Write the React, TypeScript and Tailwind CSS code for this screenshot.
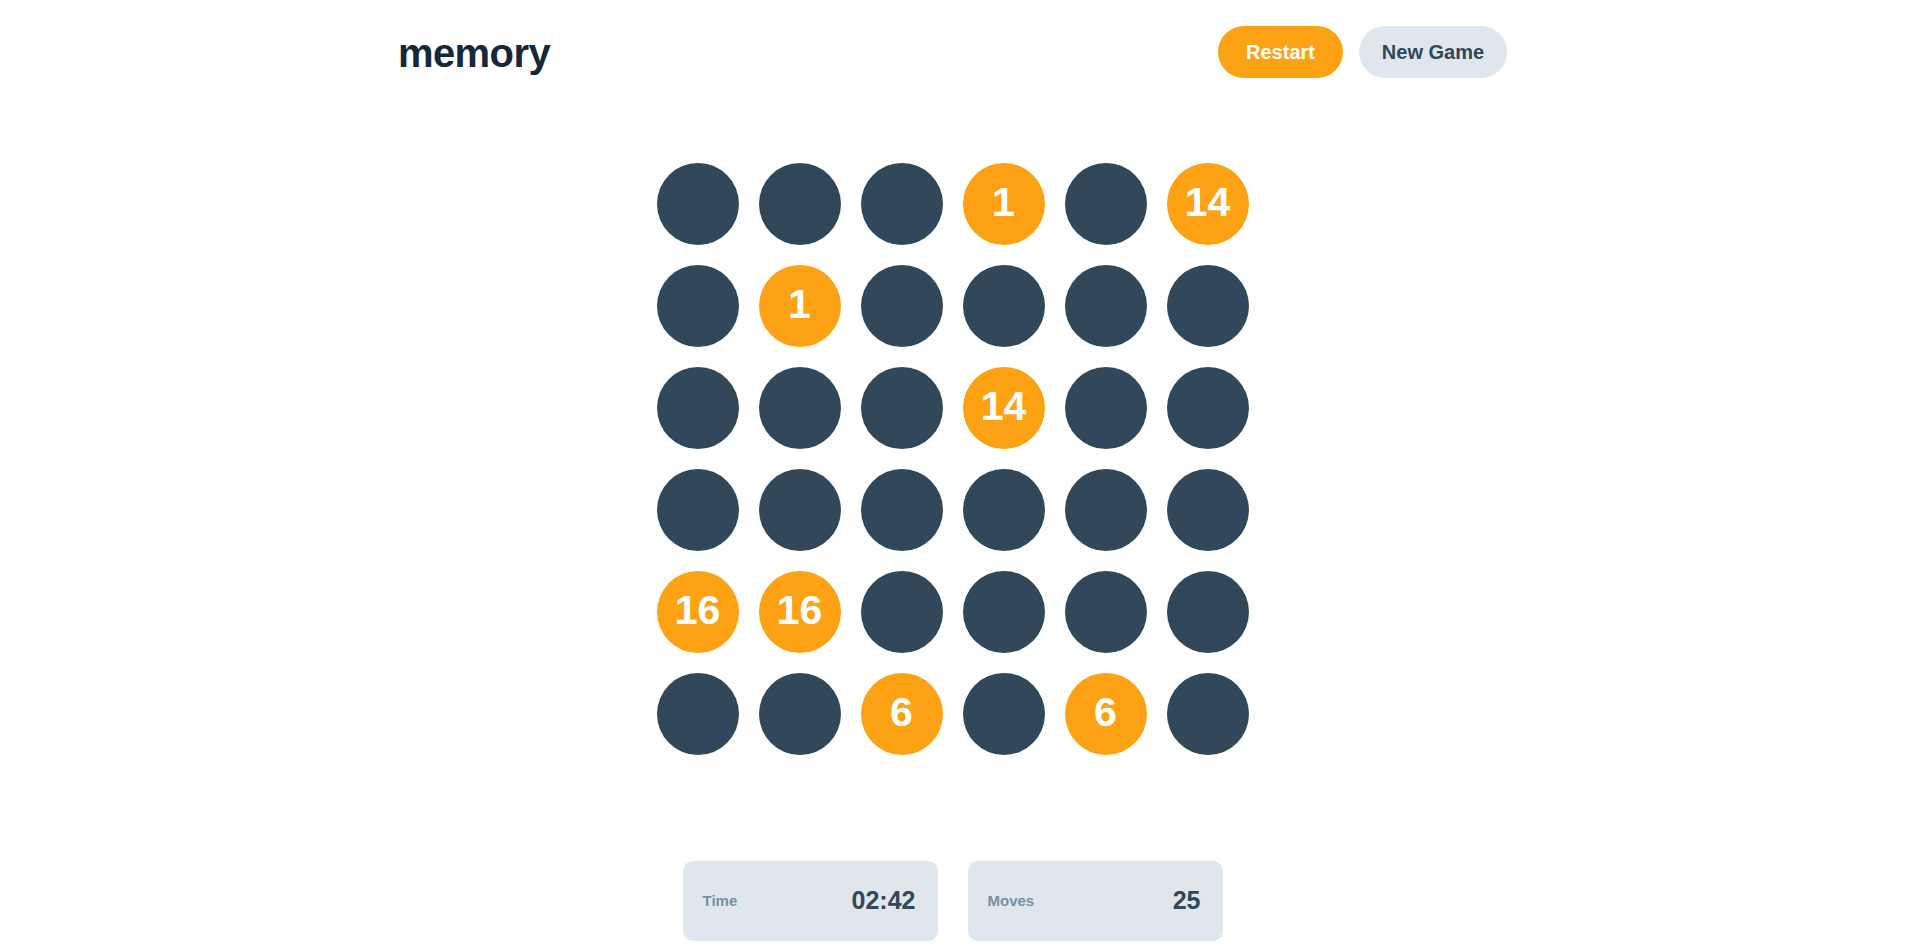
import React from 'react';

type Cell = { value: number; open: boolean };

const board: Cell[] = [
  [0, 0, 0, 1, 0, 14],
  [0, 1, 0, 0, 0, 0],
  [0, 0, 0, 14, 0, 0],
  [0, 0, 0, 0, 0, 0],
  [16, 16, 0, 0, 0, 0],
  [0, 0, 6, 0, 6, 0],
]
  .flat()
  .map((v) => ({ value: v, open: v !== 0 }));

export default function App() {
  return (
    <div className="min-h-screen bg-white font-['Liberation_Sans',Arial,sans-serif]">
      {/* Header */}
      <header className="mx-auto flex w-[1109px] items-center justify-between pt-[26px]">
        <h1 className="pt-[2px] text-[40px] font-bold leading-none tracking-[-0.6px] text-[#152938]">memory</h1>
        <div className="flex gap-4">
          <button className="h-[52px] w-[125px] rounded-full bg-[#FDA214] text-[20px] font-bold text-white">
            Restart
          </button>
          <button className="h-[52px] w-[148px] rounded-full bg-[#DFE7EC] text-[20px] font-bold text-[#304859]">
            New Game
          </button>
        </div>
      </header>

      {/* Board */}
      <div className="mx-auto mt-[85px] grid w-[592px] grid-cols-6 gap-5">
        {board.map((cell, i) => (
          <div
            key={i}
            className={
              cell.open
                ? 'flex h-[82px] w-[82px] items-center justify-center rounded-full bg-[#FDA214] pb-[3px] text-[41px] font-bold text-white'
                : 'h-[82px] w-[82px] rounded-full bg-[#304859]'
            }
          >
            {cell.open ? cell.value : null}
          </div>
        ))}
      </div>

      {/* Stats */}
      <div className="mx-auto mt-[106px] flex w-[540px] gap-[30px]">
        <div className="flex h-[80px] w-[255px] items-center justify-between rounded-[10px] bg-[#DFE7EC] pl-5 pr-[22px]">
          <span className="text-[15px] font-bold text-[#7191A5]">Time</span>
          <span className="text-[25px] font-bold text-[#304859]">02:42</span>
        </div>
        <div className="flex h-[80px] w-[255px] items-center justify-between rounded-[10px] bg-[#DFE7EC] pl-5 pr-[22px]">
          <span className="text-[15px] font-bold text-[#7191A5]">Moves</span>
          <span className="text-[25px] font-bold text-[#304859]">25</span>
        </div>
      </div>
    </div>
  );
}
